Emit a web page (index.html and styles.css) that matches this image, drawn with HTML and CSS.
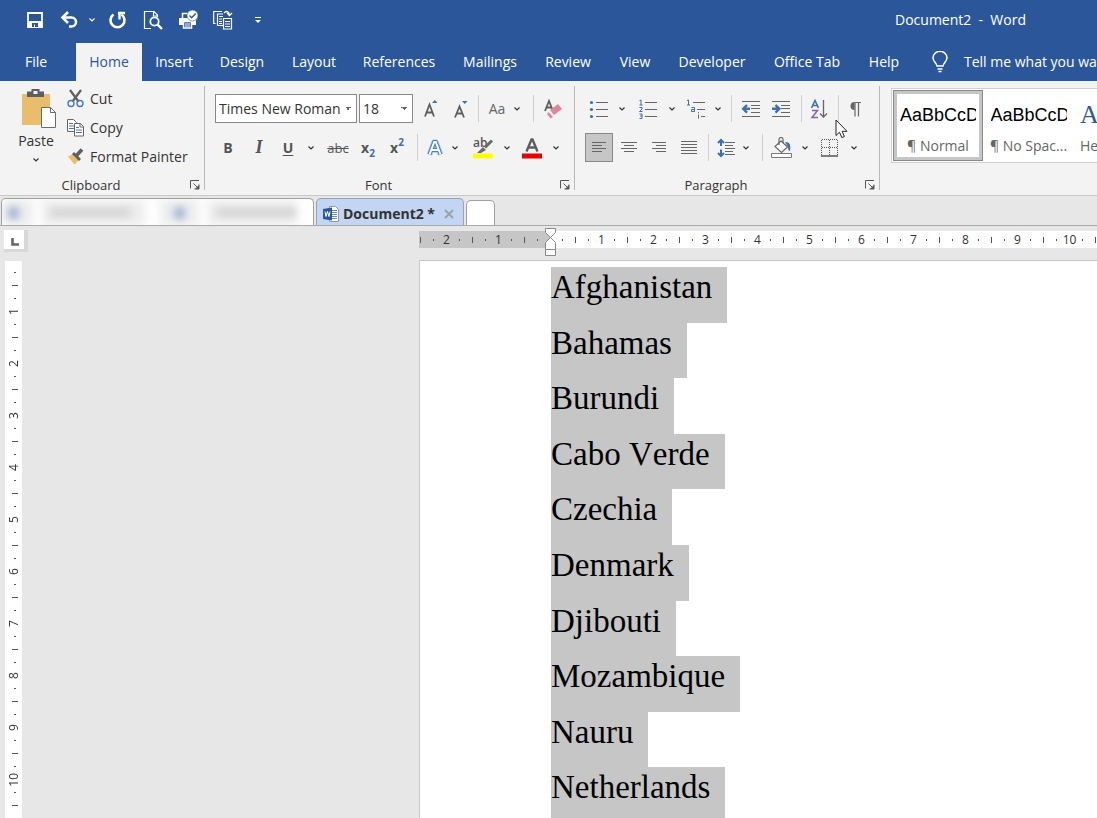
FILE: index.html
```html
<!DOCTYPE html>
<html lang="en">
<head>
<meta charset="utf-8">
<title>Document2 - Word</title>
<link rel="stylesheet" href="styles.css">
</head>
<body>
<svg class="defs" aria-hidden="true">
  <symbol id="chev" viewBox="0 0 8 6"><path d="M1.500 1.500 4 4 6.500 1.500" fill="none" stroke="currentColor" stroke-width="1.200"/></symbol>
  <symbol id="launch" viewBox="0 0 10 10"><path d="M.5 8.500V.5H9M3.500 3.500 8 8M9 4.500V9H4.500" fill="none" stroke="#555"/><path d="M9 5v4H5z" fill="#555"/></symbol>
</svg>
<div class="app">
  <header class="titlebar">
    <div class="quick">
      <button aria-label="Save"><svg width="18" height="18" viewBox="0 0 18 18"><path d="M2 2h14v14H2z" fill="none" stroke="#fff" stroke-width="1.800"/><path d="M2 10h14v6H2z" fill="#fff"/><path d="M6 12h6v4H9v-2.500H8V16H6z" fill="#2b579a"/></svg></button>
      <button class="undo" aria-label="Undo"><svg width="20" height="18" viewBox="0 0 20 18"><path d="M2 6.500h9.500a4.500 4.500 0 0 1 0 9H9" fill="none" stroke="#fff" stroke-width="2.600"/><path d="M8 1 2.500 6.500 8 12" fill="none" stroke="#fff" stroke-width="2.600"/></svg></button>
      <button aria-label="Undo list"><svg width="8" height="6"><use href="#chev"/></svg></button>
      <button aria-label="Repeat"><svg width="20" height="18" viewBox="0 0 20 18"><path d="M13.500 3.500a7 7 0 1 1-8 0" fill="none" stroke="#fff" stroke-width="2.600"/><path d="M10 2h7M11.500 2v6.500" fill="none" stroke="#fff" stroke-width="2.400"/></svg></button>
      <button aria-label="Print preview"><svg width="20" height="20" viewBox="0 0 20 20"><path d="M8 18.500H1.500v-17H11L14.500 5v2M10.500 2v4H14" fill="none" stroke="#fff" stroke-width="1.200"/><circle cx="11.500" cy="11.500" r="4.200" fill="none" stroke="#fff" stroke-width="1.800"/><path d="M14.500 14.500 19 19" stroke="#fff" stroke-width="2.400"/></svg></button>
      <button aria-label="Quick print"><svg width="20" height="20" viewBox="0 0 20 20"><path d="M1 8h17v7H1z" fill="#fff"/><path d="M4.500 8V3.500H10" fill="none" stroke="#fff" stroke-width="1.500"/><path d="M5.500 11.500h8v6.500h-8z" fill="#2b579a" stroke="#fff" stroke-width="1.500"/><path d="M7 14h5M7 16h5" stroke="#fff"/><circle cx="14.500" cy="5.500" r="5.500" fill="#fff" stroke="#2b579a" stroke-width=".6"/><path d="m11.500 5.500 2.200 2.200 4-4.200" fill="none" stroke="#2b579a" stroke-width="1.400"/></svg></button>
      <button aria-label="Copy all"><svg width="20" height="20" viewBox="0 0 20 20"><path d="M2.500 13.500H.7V1.500H9M4.500 15.500V4H10M10 15.500H4.500" fill="none" stroke="#fff" stroke-width="1.200"/><path d="M6 6.500h4M6 9h3M6 11.500h3M6 13.500h3" stroke="#fff"/><path d="M10.500 8.500h8v10.500h-8z" fill="#2b579a" stroke="#fff" stroke-width="1.200"/><path d="M12 11.500h5M12 14h5M12 16.500h5" stroke="#fff"/><path d="M11 3c2-2.500 5-2 5.500 2M14 3l2.500 2.500L19 3" fill="none" stroke="#fff" stroke-width="1.400"/></svg></button>
      <button aria-label="Customize toolbar"><svg width="8" height="8" viewBox="0 0 8 8"><path d="M1 1.500h6" stroke="#fff"/><path d="M1 4h6L4 7z" fill="#fff"/></svg></button>
    </div>
    <h1 class="title">Document2&nbsp; -&nbsp; Word</h1>
  </header>

  <nav class="tabs">
    <button class="file">File</button>
    <button class="active">Home</button>
    <button>Insert</button>
    <button>Design</button>
    <button>Layout</button>
    <button>References</button>
    <button>Mailings</button>
    <button>Review</button>
    <button>View</button>
    <button>Developer</button>
    <button>Office Tab</button>
    <button>Help</button>
    <button class="tell"><svg width="16" height="22" viewBox="0 0 16 22"><path d="M5 15c0-3-4-4-4-8.200a6.800 6.300 0 0 1 14 0C15 11 11 12 11 15zM5.500 18h5M6.500 20.500h3" fill="none" stroke="#fff" stroke-width="1.500"/></svg>Tell me what you want to do</button>
  </nav>

  <section class="ribbon">
    <div class="group clipboard">
      <div class="tools">
        <button class="paste">
          <svg width="36" height="40" viewBox="0 0 36 40"><path d="M1 5h28v31H1z" fill="#e8bd6b"/><path d="M6 2.500h4.500V0h8v2.500H23V8H6z" fill="#5e5e5e"/><path d="M12.500 2h4v3h-4z" fill="#f3f3f3"/><path d="M20.500 18.500h9l5 5v15h-14z" fill="#fff" stroke="#6b6b6b"/><path d="M29.500 18.500v5h5" fill="none" stroke="#6b6b6b"/></svg>
          <span>Paste</span>
          <svg class="more" width="8" height="6"><use href="#chev"/></svg>
        </button>
        <div class="clips">
          <button><svg width="17" height="19" viewBox="0 0 17 19"><path d="M3 1 11.500 12.500M14 1 5.500 12.500" stroke="#5e5e5e" stroke-width="2.200"/><circle cx="4" cy="14.500" r="3" fill="none" stroke="#4779b8" stroke-width="1.400"/><circle cx="13" cy="14.500" r="3" fill="none" stroke="#4779b8" stroke-width="1.400"/></svg>Cut</button>
          <button><svg width="17" height="19" viewBox="0 0 17 19"><path d="M.5 1.500h6l3 3v9h-9z" fill="#fff" stroke="#666"/><path d="M2 5.500h4M2 8h5M2 10.500h5" stroke="#4779b8"/><path d="M7.500 5.500h6l3 3v9.500h-9z" fill="#fff" stroke="#666"/><path d="M13 5.500v3.500h3.500" fill="none" stroke="#666"/><path d="M9 9.500h3M9 12h6M9 14.500h6" stroke="#4779b8"/></svg>Copy</button>
          <button><svg width="17" height="17" viewBox="0 0 17 17"><path d="M1 8.500 6 6l6 6-4.500 4.500z" fill="#e8bd6b"/><path d="m7 4 7 7-2 2-7-7z" fill="#5e5e5e"/><path d="m9.500 7.500 5.500-6" stroke="#5e5e5e" stroke-width="3.600"/></svg>Format Painter</button>
        </div>
      </div>
      <footer>Clipboard<button class="launch" aria-label="Clipboard settings"><svg width="10" height="10"><use href="#launch"/></svg></button></footer>
    </div>

    <div class="group font">
      <div class="tools rows">
        <div class="row font-top">
          <select class="combo name" aria-label="Font"><option>Times New Roman</option></select>
          <select class="combo size" aria-label="Font size"><option>18</option></select>
          <button aria-label="Grow font"><svg width="16" height="20" viewBox="0 0 16 20"><path d="M2 17.500 6.500 5.500 11 17.500M3.500 13.500h6" fill="none" stroke="#5e5e5e" stroke-width="1.800"/><path d="M9 4h5.500L11.800 1z" fill="#3f6fae"/></svg></button>
          <button aria-label="Shrink font"><svg width="16" height="20" viewBox="0 0 16 20"><path d="M2 18.500 6.500 7.500 11 18.500M3.500 14.500h6" fill="none" stroke="#5e5e5e" stroke-width="1.800"/><path d="M9 2h5.500L11.800 5z" fill="#3f6fae"/></svg></button>
          <i class="sep"></i>
          <button class="case" aria-label="Change case">Aa</button>
          <button aria-label="Case list"><svg width="8" height="6"><use href="#chev"/></svg></button>
          <i class="sep"></i>
          <button aria-label="Clear formatting"><svg width="20" height="20" viewBox="0 0 20 20"><path d="m2 12 4-10 4 10M3.500 8.500h5" fill="none" stroke="#5e5e5e" stroke-width="1.800"/><path d="m7 11 8-6 4 5-8 6z" fill="#e2849b"/><path d="m5.500 13 4.500 5-2.500 1.500-3.500-4.500z" fill="#e2849b"/></svg></button>
        </div>
        <div class="row font-bottom">
          <button class="bold" aria-label="Bold">B</button>
          <button class="italic" aria-label="Italic">I</button>
          <button class="under" aria-label="Underline">U</button>
          <button aria-label="Underline list"><svg width="8" height="6"><use href="#chev"/></svg></button>
          <button class="strike" aria-label="Strikethrough">abc</button>
          <button class="script" aria-label="Subscript">x<sub>2</sub></button>
          <button class="script" aria-label="Superscript">x<sup>2</sup></button>
          <i class="sep"></i>
          <button aria-label="Text effects"><svg width="18" height="20" viewBox="0 0 18 20"><g fill="none" stroke-linejoin="round"><path d="M3.500 16.500 8.200 4h1.600l4.700 12.500M5.500 12h7" stroke="#a9c9ee" stroke-width="5.600"/><path d="M3.500 16.500 8.200 4h1.600l4.700 12.500M5.500 12h7" stroke="#4b80c2" stroke-width="4"/><path d="M3.500 16.500 8.200 4h1.600l4.700 12.500M5.500 12h7" stroke="#fff" stroke-width="2"/></g></svg></button>
          <button aria-label="Effects list"><svg width="8" height="6"><use href="#chev"/></svg></button>
          <button aria-label="Highlight"><svg width="22" height="22" viewBox="0 0 22 22"><text x="1" y="10" class="mark">ab</text><path d="m20 3.500-7 7" stroke="#6b6b6b" stroke-width="3"/><path d="m11 10 3 3-5 3H5z" fill="#6b6b6b"/><path d="M1 16.500h20v5H1z" fill="#ff0"/></svg></button>
          <button aria-label="Highlight list"><svg width="8" height="6"><use href="#chev"/></svg></button>
          <button aria-label="Font color"><svg width="22" height="22" viewBox="0 0 22 22"><path d="M5.500 14.500 10.500 2.500h1l5 12M7.500 10.500h7" fill="none" stroke="#5e5e5e" stroke-width="2.400"/><path d="M1 16.500h20v5H1z" fill="#e60000"/></svg></button>
          <button aria-label="Color list"><svg width="8" height="6"><use href="#chev"/></svg></button>
        </div>
      </div>
      <footer>Font<button class="launch" aria-label="Font settings"><svg width="10" height="10"><use href="#launch"/></svg></button></footer>
    </div>

    <div class="group para">
      <div class="tools rows">
        <div class="row para-top">
          <button aria-label="Bullets"><svg width="20" height="20" viewBox="0 0 20 20"><path d="M7 3.500h12M7 10.500h12M7 17.500h12" stroke="#666"/><g fill="#3f6fae"><circle cx="2.500" cy="3.500" r="1.600"/><circle cx="2.500" cy="10.500" r="1.600"/><circle cx="2.500" cy="17.500" r="1.600"/></g></svg></button>
          <button aria-label="Bullet list"><svg width="8" height="6"><use href="#chev"/></svg></button>
          <button aria-label="Numbering"><svg width="20" height="20" viewBox="0 0 20 20"><path d="M7 3.500h12M7 10.500h12M7 17.500h12" stroke="#666"/><path d="M1.500 1.500 3 1v5M1.500 6h3M1.500 8.500h2.500v1.500L1.500 12.500H4.500M1.500 15h2.500v4.500H1.500M2 17h2" fill="none" stroke="#3f6fae"/></svg></button>
          <button aria-label="Numbering list"><svg width="8" height="6"><use href="#chev"/></svg></button>
          <button aria-label="Multilevel list"><svg width="20" height="20" viewBox="0 0 20 20"><path d="M7 3.500h12M11 10.500h8M15 17.500h4" stroke="#666"/><path d="M1 1.500 2.500 1v5M1 6h3M5.500 8.500h3v4H5.500v-2h3" fill="none" stroke="#3f6fae"/><path d="M12.500 13v1.200M12.500 15.500v4" stroke="#666"/></svg></button>
          <button aria-label="Multilevel options"><svg width="8" height="6"><use href="#chev"/></svg></button>
          <i class="sep"></i>
          <button aria-label="Decrease indent"><svg width="20" height="18" viewBox="0 0 20 18"><path d="M1 1.500h18M10 5.500h9M10 8.500h9M10 12.500h9M1 16.500h18" stroke="#666"/><path d="M2 8.800h7M6 5 2.200 8.800 6 12.600" fill="none" stroke="#3f6fae" stroke-width="2.400"/></svg></button>
          <button aria-label="Increase indent"><svg width="20" height="18" viewBox="0 0 20 18"><path d="M1 1.500h18M10 5.500h9M10 8.500h9M10 12.500h9M1 16.500h18" stroke="#666"/><path d="M1 8.800h7M4.500 5l3.800 3.800L4.500 12.600" fill="none" stroke="#3f6fae" stroke-width="2.400"/></svg></button>
          <i class="sep"></i>
          <button aria-label="Sort"><svg width="18" height="20" viewBox="0 0 18 20"><path d="M1.500 9 5 1.500 8.500 9M2.500 6.500h5" fill="none" stroke="#3f6fae" stroke-width="1.600"/><path d="M2 11.500h5.500l-5.500 7H8" fill="none" stroke="#8b5fb0" stroke-width="1.500"/><path d="M13.500 1v17M10 14.500l3.500 3.500 3.500-3.500" fill="none" stroke="#666" stroke-width="1.300"/></svg></button>
          <i class="sep"></i>
          <button aria-label="Show marks"><svg width="12" height="16" viewBox="0 0 12 16"><path d="M5.500 1a4 4 0 0 0 0 8z" fill="#666"/><path d="M5.500 1.500H12M6 1v14.500M9.500 1v14.500" fill="none" stroke="#666" stroke-width="1.200"/></svg></button>
        </div>
        <div class="row para-bottom">
          <button class="pressed" aria-label="Align left"><svg width="16" height="14" viewBox="0 0 16 14"><path d="M1 1.500h14M1 4.500h10M1 7.500h14M1 10.500h10" stroke="#666"/></svg></button>
          <button aria-label="Center"><svg width="16" height="14" viewBox="0 0 16 14"><path d="M0 1.500h16M3 4.500h10M0 7.500h16M3 10.500h10" stroke="#666"/></svg></button>
          <button aria-label="Align right"><svg width="16" height="14" viewBox="0 0 16 14"><path d="M1 1.500h14M5 4.500h10M1 7.500h14M5 10.500h10" stroke="#666"/></svg></button>
          <button aria-label="Justify"><svg width="16" height="14" viewBox="0 0 16 14"><path d="M0 .5h16M0 3.500h16M0 6.500h16M0 9.500h16M0 12.500h16" stroke="#666"/></svg></button>
          <i class="sep"></i>
          <button aria-label="Line spacing"><svg width="18" height="20" viewBox="0 0 18 20"><path d="M8 4.500h10M8 7.500h8M8 10.500h10M8 13.500h8M8 16.500h10" stroke="#666"/><path d="M4 2v6M1 5l3-3 3 3M4 11.500V18M1 15l3 3 3-3" fill="none" stroke="#3f6fae" stroke-width="2"/></svg></button>
          <button aria-label="Spacing list"><svg width="8" height="6"><use href="#chev"/></svg></button>
          <i class="sep"></i>
          <button aria-label="Shading"><svg width="22" height="22" viewBox="0 0 22 22"><path d="M.5 16.500h20v4H.5z" fill="#fff" stroke="#777"/><path d="m10 4 6.500 6-6 5.500-6.500-6z" fill="#fff" stroke="#666" stroke-width="1.200"/><path d="M8 8V2.500a2 2 0 0 1 4 0V6" fill="none" stroke="#666" stroke-width="1.200"/><path d="M14 5c5 0 6 3 5 9-1 0-2-1-2-4z" fill="#3f6fae"/></svg></button>
          <button aria-label="Shading list"><svg width="8" height="6"><use href="#chev"/></svg></button>
          <button aria-label="Borders"><svg width="18" height="18" viewBox="0 0 18 18"><path d="M.5 16V.5h16V16M8.500 1v15M1 8.500h16" fill="none" stroke="#555" stroke-dasharray="1 1"/><path d="M0 17h17" stroke="#555" stroke-width="1.500"/></svg></button>
          <button aria-label="Border list"><svg width="8" height="6"><use href="#chev"/></svg></button>
        </div>
      </div>
      <footer>Paragraph<button class="launch" aria-label="Paragraph settings"><svg width="10" height="10"><use href="#launch"/></svg></button></footer>
    </div>

    <div class="gallery">
      <button class="style chosen"><b class="sample">AaBbCcDd</b><span>¶ Normal</span></button>
      <button class="style"><b class="sample">AaBbCcDd</b><span>¶ No Spac...</span></button>
      <button class="style"><b class="sample heading">AaBb</b><span>Heading 1</span></button>
    </div>
    <svg class="pointer" width="13" height="20" viewBox="0 0 13 20"><path d="M1 1v15.500l3.500-3.300 2.300 5.400 2.600-1.100-2.300-5.200H12z" fill="#fff" stroke="#222"/></svg>
  </section>

  <div class="doctabs">
    <div class="hidden-tabs"><div class="smudge"><i class="spot"></i><i class="pale"></i><i class="line"></i><i class="pale wide"></i><i class="spot"></i><i class="pale"></i><i class="line"></i></div></div>
    <div class="doctab">
      <svg width="16" height="16" viewBox="0 0 16 16"><path d="M6.500.5h6l3 3v12h-9z" fill="#fff" stroke="#999"/><path d="M9 4.500h5M9 6.500h5M9 8.500h5M9 10.500h5M9 12.500h5" stroke="#6a8cc0"/><path d="m0 3 9-1.500v13L0 13z" fill="#2b579a"/><path d="m2 5.500 1 5 1.500-5 1.500 5 1-5" fill="none" stroke="#fff"/></svg>
      <span>Document2 *</span>
      <button aria-label="Close"><svg width="10" height="10" viewBox="0 0 10 10"><path d="m1 1 8 8M9 1 1 9" stroke="#9a9fa8" stroke-width="1.800"/></svg></button>
    </div>
    <button class="newtab" aria-label="New document"></button>
  </div>

  <main class="work">
    <div class="corner"><button class="tabstop" aria-label="Tab stop"><svg width="8" height="8" viewBox="0 0 8 8"><path d="M1.500 0v6.500H8" fill="none" stroke="#666" stroke-width="2.600"/></svg></button></div>
    <div class="hruler">
      <ol class="margin"><li>3</li><li>2</li><li>1</li><li class="rest"></li></ol>
      <ol class="body"><li>1</li><li>2</li><li>3</li><li>4</li><li>5</li><li>6</li><li>7</li><li>8</li><li>9</li><li>10</li><li></li></ol>
      <svg class="indent" width="13" height="28" viewBox="0 0 13 28"><path d="M1.500.5h10v4l-5 5-5-5zM1.500 27.500v-13l5-5 5 5v13zM1.500 21.500h10" fill="#fff" stroke="#888"/></svg>
    </div>
    <ol class="vruler"><li><span>1</span></li><li><span>2</span></li><li><span>3</span></li><li><span>4</span></li><li><span>5</span></li><li><span>6</span></li><li><span>7</span></li><li><span>8</span></li><li><span>9</span></li><li><span>10</span></li><li></li></ol>
    <article class="page">
      <p>Afghanistan</p><p>Bahamas</p><p>Burundi</p><p>Cabo Verde</p><p>Czechia</p><p>Denmark</p><p>Djibouti</p><p>Mozambique</p><p>Nauru</p><p>Netherlands</p>
    </article>
  </main>
</div>
</body>
</html>
```
FILE: styles.css
```css
* { box-sizing: border-box; }
body { margin: 0; overflow: hidden; font: 14px/20px "Open Sans", "Noto Sans", sans-serif; color: #333; }
button { border: 0; padding: 0; background: none; font: inherit; color: inherit; white-space: nowrap; }
svg { display: block; flex: none; }
ol, p, h1 { margin: 0; padding: 0; list-style: none; font-weight: 400; }
.defs { position: absolute; width: 0; height: 0; }
.app { display: flex; flex-direction: column; height: 100vh; overflow: hidden; background: #e7e7e7; }

.titlebar { display: flex; align-items: center; justify-content: space-between; height: 40px; flex: none; padding-right: 71px; background: #2b579a; color: #fff; }
.quick { display: grid; grid-template-columns: 18px 44px 8px 44px 26px 44px 26px 44px; padding-left: 26px; }
.quick button { display: grid; place-items: center; height: 40px; }
.quick .undo { padding-left: 8px; }
.title { font-size: 14px; }

.tabs { display: grid; grid-template-columns: 76px 66px 64px 72px 72px 98px 84px 72px 62px 92px 98px 56px auto; flex: none; height: 41px; padding-top: 3px; background: #2b579a; color: #fff; overflow: hidden; }
.tabs .file { padding-right: 4px; }
.tabs .active { background: #f3f3f3; color: #2b579a; }
.tabs .tell { display: flex; align-items: center; gap: 16px; padding-left: 20px; }

.ribbon { position: relative; display: flex; flex: none; height: 115px; padding: 5px 0; background: #f3f3f3; border-bottom: 1px solid #c9c9c9; overflow: hidden; }
.group { display: flex; flex-direction: column; justify-content: space-between; flex: none; border-right: 1px solid #b9b9b9; }
.group footer { position: relative; padding-right: 22px; font-size: 13px; line-height: 18px; height: 14px; text-align: center; }
.launch { position: absolute; right: 4px; bottom: 0; }
.clipboard { width: 205px; }
.font { width: 370px; }
.para { width: 305px; }
.tools { display: flex; }
.rows { flex-direction: column; gap: 10px; padding: 8px 0 0 10px; }
.row { display: grid; height: 29px; }
.row button { display: flex; align-items: center; justify-content: center; min-width: 0; }
.font-top { grid-template-columns: 144px 54px 36px 24px 10px 28px 12px 20px 20px; }
.font-bottom { grid-template-columns: 26px 36px 22px 24px 30px 30px 28px 12px 24px 16px 40px 8px 42px 6px; }
.para-top { grid-template-columns: 28px 18px 34px 14px 34px 10px 16px 24px 36px 4px 32px 6px 28px; }
.para-bottom { grid-template-columns: 28px 32px 28px 32px 6px 30px 10px 22px 18px 28px 22px 26px; }
.sep { width: 1px; height: 27px; background: #d0d0d0; justify-self: center; align-self: center; }

.paste { display: flex; flex-direction: column; align-items: center; width: 60px; padding: 3px 0 0 18px; }
.paste span { margin: 2px 6px 6px 0; line-height: 20px; }
.more { margin-right: 6px; }
.clips { display: grid; grid-template-rows: repeat(3, 29px); align-content: start; padding: 0 0 0 7px; margin-top: -2px; }
.clips button { display: flex; align-items: center; gap: 6px; }

.combo { appearance: none; height: 29px; margin: 0; border: 1px solid #888; border-radius: 0; color: #333; font: 14px "Open Sans", sans-serif; padding: 0 14px 0 3px; background: linear-gradient(45deg, transparent 50%, #666 50%) right 8px center / 3px 3px no-repeat, linear-gradient(315deg, transparent 50%, #666 50%) right 5px center / 3px 3px no-repeat, #fff; }
.combo.name { width: 142px; }
.case { color: #666; }
.bold, .under, .script { font-weight: 700; color: #555; }
.italic { font: italic 700 18px "Liberation Serif", serif; color: #555; }
.under { text-decoration: underline; text-underline-offset: 2px; }
.strike { font-size: 13px; color: #555; text-decoration: line-through; }
.script sub, .script sup { font-size: 10px; line-height: 1; color: #3f6fae; }
.script sub { align-self: end; padding-bottom: 4px; }
.script sup { align-self: start; padding-top: 4px; }
.pressed { background: #c6c6c6; border: 1px solid #888; }
.row .pressed { border: 1px solid #888; background: #c6c6c6; }
.mark { font: 600 12px "Open Sans", sans-serif; fill: #555; }

.gallery { display: flex; gap: 1px; height: 75px; margin: 2px 0 0 11px; padding: 1px; flex: 1 0 200px; border: 1px solid #d0d0d0; background: #fff; }
.style { display: flex; flex-direction: column; align-items: center; justify-content: space-between; flex: none; width: 89px; height: 71px; padding: 8px 1px 0; border: 5px solid transparent; overflow: hidden; color: #666; }
.chosen { width: 90px; border: 4px solid #c6c6c6; outline: 1px solid #888; outline-offset: -1px; padding: 9px 3px 1px; }
.style span { flex: none; line-height: 20px; }
.sample { width: 76px; overflow: hidden; text-align: left; font: 18px/24px "Liberation Sans", sans-serif; color: #000; }
.heading { font: 26px/24px "Liberation Serif", serif; color: #2e5c93; }
.style:last-child { align-items: flex-start; }
.pointer { position: absolute; left: 835px; top: 38px; }

.doctabs { display: flex; align-items: flex-end; flex: none; height: 30px; border-bottom: 1px solid #a9a9a9; }
.hidden-tabs { width: 313px; height: 27px; margin: 0 2px 0 1px; border: 1px solid #a0a0a0; border-bottom: 0; border-radius: 5px 5px 0 0; background: #fff; overflow: hidden; }
.smudge { display: flex; align-items: center; gap: 14px; width: 295px; height: 27px; background: #eee; filter: blur(4px); }
.spot { width: 12px; height: 12px; margin-left: 6px; border-radius: 6px; background: #93a5cc; }
.pale { width: 10px; height: 26px; background: #fff; }
.pale.wide { width: 16px; }
.line { width: 90px; height: 7px; margin-left: -6px; background: #ccc; }
.smudge .spot ~ .spot { margin-left: 0; }
.doctab { display: flex; align-items: center; width: 148px; height: 27px; padding: 3px 9px 0 6px; border: 1px solid #98a3b5; border-bottom: 0; border-radius: 5px 5px 0 0; background: #c2d5f2; font-weight: 700; }
.doctab span { flex: 1; padding-left: 4px; white-space: nowrap; }
.newtab { width: 29px; height: 25px; margin-left: 2px; border: 1px solid #a0a0a0; border-bottom: 0; border-radius: 5px 5px 0 0; background: #fff; }

.work { display: grid; grid-template-columns: 419px 1fr; grid-template-rows: 34px 1fr; flex: 1; min-height: 0; overflow: hidden; }
.corner { padding: 4px; }
.tabstop { display: grid; place-items: center; width: 24px; height: 22px; border: solid #d8d8d8; border-width: 0 4px 3px 0; background: #fff; padding: 4px 0 0 2px; }
.hruler { position: relative; display: flex; align-items: flex-start; padding-top: 5px; font-size: 12px; }
.hruler ol { display: flex; height: 17px; }
.hruler li { flex: none; width: 52px; padding-left: 39px; line-height: 17px; display: flex; justify-content: center; background: linear-gradient(#555, #555) 6px 8px / 1px 2px no-repeat, linear-gradient(#555, #555) 19px 6px / 1px 6px no-repeat, linear-gradient(#555, #555) 32px 8px / 1px 2px no-repeat; }
.margin { width: 132px; justify-content: flex-end; padding-right: 7px; background: #c6c6c6; overflow: hidden; }
.hruler .rest { width: 39px; padding: 0; }
.hruler .body { flex: 1; padding-left: 5px; background: #fff; overflow: hidden; width: 0; }
.indent { position: absolute; left: 125px; top: 2px; }
.vruler { width: 17px; margin: 1px 0 0 5px; padding-top: 5px; background: #fff; font-size: 12px; overflow: hidden; }
.vruler li { display: flex; align-items: center; justify-content: center; height: 52px; padding-top: 39px; background: linear-gradient(#555, #555) 9px 6px / 2px 1px no-repeat, linear-gradient(#555, #555) 7px 19px / 6px 1px no-repeat, linear-gradient(#555, #555) 9px 32px / 2px 1px no-repeat; }
.vruler span { writing-mode: vertical-rl; transform: rotate(180deg); line-height: 15px; }
.page { display: grid; grid-template-rows: repeat(10, 1fr); justify-items: start; height: 563px; padding: 6px 0 0 131px; border: solid #c6c6c6; border-width: 1px 0 0 1px; background: #fff; font: 33px/38px "Liberation Serif", serif; font-kerning: none; color: #000; }
.page p { padding: 1px 15px 0 0; background: #c6c6c6; }
```
